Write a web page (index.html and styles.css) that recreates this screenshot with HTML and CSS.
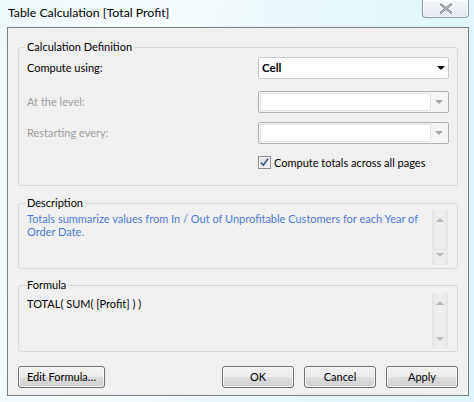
FILE: index.html
```html
<!DOCTYPE html>
<html lang="en">
<head>
<meta charset="utf-8">
<title>Table Calculation [Total Profit]</title>
<link rel="stylesheet" href="styles.css">
</head>
<body>
<div class="window">
  <div class="titlebar">
    <span class="title">Table Calculation [Total Profit]</span>
    <button class="close" type="button" aria-label="Close">
      <svg width="14" height="11" viewBox="0 0 14 11">
        <path d="M2 1.5 L12 9.5 M12 1.5 L2 9.5" stroke="#ffffff" stroke-width="4.2" stroke-linecap="round" fill="none"/>
        <path d="M2 1.5 L12 9.5 M12 1.5 L2 9.5" stroke="#7c8590" stroke-width="2.4" stroke-linecap="round" fill="none"/>
        <path d="M2 1.5 L12 9.5 M12 1.5 L2 9.5" stroke="#c9ced4" stroke-width="1" stroke-linecap="round" fill="none"/>
      </svg>
    </button>
  </div>

  <div class="client">
    <fieldset class="group group-def">
      <legend>Calculation Definition</legend>
      <div class="field-grid">
        <div class="field-label">Compute using:</div>
        <div class="combo">
          <span class="combo-value">Cell</span>
          <span class="combo-arrow"></span>
        </div>

        <div class="field-label disabled row-level">At the level:</div>
        <div class="combo combo-disabled row-level">
          <span class="combo-field"></span>
          <span class="combo-arrow"></span>
        </div>

        <div class="field-label disabled row-restart">Restarting every:</div>
        <div class="combo combo-disabled row-restart">
          <span class="combo-field"></span>
          <span class="combo-arrow"></span>
        </div>

        <div class="check-row">
          <span class="checkbox">
            <svg width="11" height="11" viewBox="0 0 11 11">
              <path d="M2 5.5 L4.3 8.3 L9 1.8" stroke="#4a5e8c" stroke-width="1.8" fill="none" stroke-linejoin="round"/>
            </svg>
          </span>
          <span class="check-label">Compute totals across all pages</span>
        </div>
      </div>
    </fieldset>

    <fieldset class="group group-desc">
      <legend>Description</legend>
      <div class="text-box">
        <p class="desc-text">Totals summarize values from In / Out of Unprofitable Customers for each Year of Order Date.</p>
        <div class="scrollbar">
          <span class="arrow-up"></span>
          <span class="arrow-down"></span>
        </div>
      </div>
    </fieldset>

    <fieldset class="group group-formula">
      <legend>Formula</legend>
      <div class="text-box">
        <p class="formula-text">TOTAL( SUM( [Profit] ) )</p>
        <div class="scrollbar">
          <span class="arrow-up"></span>
          <span class="arrow-down"></span>
        </div>
      </div>
    </fieldset>

    <div class="button-row">
      <button class="btn btn-edit" type="button">Edit Formula…</button>
      <button class="btn btn-ok" type="button">OK</button>
      <button class="btn" type="button">Cancel</button>
      <button class="btn" type="button">Apply</button>
    </div>
  </div>
</div>
</body>
</html>
```

FILE: styles.css
```css
* {
  box-sizing: border-box;
}

html, body {
  margin: 0;
  padding: 0;
}

body {
  width: 474px;
  height: 402px;
  overflow: hidden;
  font-family: Lato, "Noto Sans", sans-serif;
  font-size: 11px;
  color: #000;
  background: linear-gradient(100deg, #eef9fc 0%, #f6fcfe 30%, #e8f7fb 60%, #def5fa 100%);
}

.window {
  width: 474px;
  height: 402px;
}

/* Title bar */
.titlebar {
  height: 27px;
  display: flex;
  align-items: flex-start;
  justify-content: space-between;
  padding: 0 5px 0 8px;
}

.title {
  font-size: 12.3px;
  line-height: 16px;
  margin-top: 5px;
}

.close {
  width: 47px;
  height: 18px;
  margin: 0;
  padding: 0;
  border: 1px solid #8a98a6;
  border-top: none;
  border-radius: 0 0 4px 4px;
  background: linear-gradient(#f4f8fb, #e3eaf0);
  box-shadow: inset 0 0 0 1px rgba(255, 255, 255, 0.7);
  display: flex;
  align-items: center;
  justify-content: center;
}

.close svg {
  display: block;
  margin-top: -1px;
}

/* Client area */
.client {
  margin: 0 5px 0 7px;
  height: 369px;
  border: 1px solid #7d7d7d;
  background: #f0f0f0;
  padding: 11px 10px 0 10px;
}

/* Group boxes */
.group {
  margin: 0;
  border: 1px solid #d3dbe0;
  border-radius: 3px;
  padding: 2px 8px 0 8px;
  min-width: 0;
}

.group legend {
  font-size: 11px;
  line-height: 16px;
  padding: 0 2px;
  margin-left: -2px;
}

.group-def {
  padding-bottom: 15px;
}

.field-grid {
  display: grid;
  grid-template-columns: 231px 191px;
  align-items: center;
}

.field-label {
  line-height: 16px;
}

.field-label.disabled {
  color: #a0a0a0;
}

.row-level {
  margin-top: 12px;
}

.row-restart {
  margin-top: 9px;
}

.combo {
  height: 22px;
  background: #fff;
  border: 1px solid #c6c9cc;
  border-radius: 2px;
  display: flex;
  align-items: center;
}

.combo-value {
  font-weight: bold;
  font-size: 11.5px;
  padding-left: 3px;
  line-height: 16px;
}

.combo-arrow {
  margin-left: auto;
  margin-right: 3px;
  width: 0;
  height: 0;
  border-left: 4px solid transparent;
  border-right: 4px solid transparent;
  border-top: 4px solid #000;
}

.combo-disabled {
  border-color: #aeb2b5;
  background: #f4f4f4;
  padding: 1px;
}

.combo-disabled .combo-field {
  align-self: stretch;
  width: 171px;
  background: #fff;
  border: 1px solid #e4e4e4;
}

.combo-disabled .combo-arrow {
  margin-right: 4px;
  border-top-color: #a8a8a8;
}

.check-row {
  grid-column: 2;
  margin-top: 11px;
  display: flex;
  align-items: center;
  height: 15px;
}

.checkbox {
  width: 13px;
  height: 13px;
  border: 1px solid #8e8f8f;
  background: linear-gradient(135deg, #dcdcdc, #f4f4f4);
  box-shadow: inset 0 0 0 1px #f4f4f4;
  display: flex;
  align-items: center;
  justify-content: center;
}

.checkbox svg {
  display: block;
}

.check-label {
  margin-left: 3px;
  line-height: 16px;
}

/* Description / formula */
.group-desc {
  margin-top: 9px;
  padding-right: 9px;
  padding-bottom: 3px;
  padding-top: 0;
}

.group-formula {
  margin-top: 8px;
  padding-right: 9px;
  padding-bottom: 2px;
  padding-top: 0;
}

.text-box {
  display: flex;
  align-items: flex-start;
}

.desc-text,
.formula-text {
  flex: 1;
  margin: 0;
  line-height: 13px;
  padding-right: 6px;
}

.desc-text {
  color: #4e7cd6;
  padding-top: 1px;
}

.formula-text {
  padding-top: 4px;
}

.scrollbar {
  width: 16px;
  display: flex;
  flex-direction: column;
  align-items: center;
  justify-content: space-between;
  background: linear-gradient(90deg, #e8e8e8, #efefef 50%, #e8e8e8);
  border-left: 1px solid #e2e2e2;
  border-right: 1px solid #e2e2e2;
  padding: 8px 0 8px;
}

.group-desc .scrollbar {
  height: 55px;
  margin-top: -1px;
}

.group-formula .scrollbar {
  height: 56px;
}

.arrow-up {
  width: 0;
  height: 0;
  border-left: 4px solid transparent;
  border-right: 4px solid transparent;
  border-bottom: 4px solid #b8b8b8;
}

.arrow-down {
  width: 0;
  height: 0;
  border-left: 4px solid transparent;
  border-right: 4px solid transparent;
  border-top: 4px solid #b8b8b8;
}

/* Buttons */
.button-row {
  margin-top: 14px;
  display: flex;
  align-items: center;
  gap: 10px;
}

.btn {
  height: 22px;
  width: 72px;
  padding: 0;
  margin: 0;
  font-family: Lato, "Noto Sans", sans-serif;
  font-size: 11px;
  line-height: 16px;
  color: #000;
  border: 1px solid #707070;
  border-radius: 3px;
  background: linear-gradient(#f2f2f2 0%, #ebebeb 50%, #dddddd 51%, #cfcfcf 100%);
  box-shadow: inset 0 0 0 1px rgba(255, 255, 255, 0.75);
}

.btn-edit {
  width: 87px;
}

.btn-ok {
  margin-left: auto;
}
```
